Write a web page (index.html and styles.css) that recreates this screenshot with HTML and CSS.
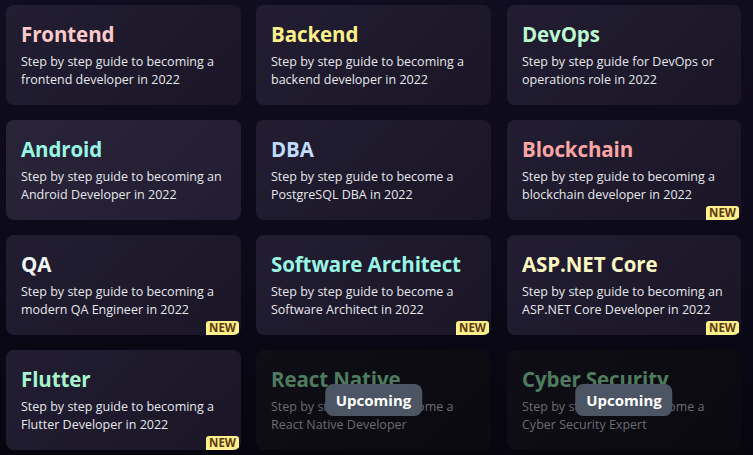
FILE: index.html
```html
<!DOCTYPE html>
<html>
<head>
<meta charset="utf-8">
<link rel="stylesheet" href="styles.css">
</head>
<body>
<div class="grid">
  <a class="card">
    <h3 class="title t-frontend">Frontend</h3>
    <p class="desc">Step by step guide to becoming a frontend developer in 2022</p>
  </a>
  <a class="card">
    <h3 class="title t-backend">Backend</h3>
    <p class="desc">Step by step guide to becoming a backend developer in 2022</p>
  </a>
  <a class="card">
    <h3 class="title t-devops">DevOps</h3>
    <p class="desc">Step by step guide for DevOps or operations role in 2022</p>
  </a>
  <a class="card card-hover">
    <h3 class="title t-android">Android</h3>
    <p class="desc">Step by step guide to becoming an Android Developer in 2022</p>
  </a>
  <a class="card">
    <h3 class="title t-dba">DBA</h3>
    <p class="desc">Step by step guide to become a PostgreSQL DBA in 2022</p>
  </a>
  <a class="card">
    <h3 class="title t-blockchain">Blockchain</h3>
    <p class="desc">Step by step guide to becoming a blockchain developer in 2022</p>
    <span class="new">NEW</span>
  </a>
  <a class="card">
    <h3 class="title t-qa">QA</h3>
    <p class="desc">Step by step guide to becoming a modern QA Engineer in 2022</p>
    <span class="new">NEW</span>
  </a>
  <a class="card">
    <h3 class="title t-arch">Software Architect</h3>
    <p class="desc">Step by step guide to become a Software Architect in 2022</p>
    <span class="new">NEW</span>
  </a>
  <a class="card">
    <h3 class="title t-asp">ASP.NET Core</h3>
    <p class="desc">Step by step guide to becoming an ASP.NET Core Developer in 2022</p>
    <span class="new">NEW</span>
  </a>
  <a class="card">
    <h3 class="title t-flutter">Flutter</h3>
    <p class="desc">Step by step guide to becoming a Flutter Developer in 2022</p>
    <span class="new">NEW</span>
  </a>
  <div class="card card-upcoming">
    <div class="dim">
      <h3 class="title t-up">React Native</h3>
      <p class="desc">Step by step guide to become a React Native Developer</p>
    </div>
    <span class="upcoming">Upcoming</span>
  </div>
  <div class="card card-upcoming">
    <div class="dim">
      <h3 class="title t-up">Cyber Security</h3>
      <p class="desc">Step by step guide to become a Cyber Security Expert</p>
    </div>
    <span class="upcoming">Upcoming</span>
  </div>
</div>
</body>
</html>
```

FILE: styles.css
```css
* { box-sizing: border-box; }
html, body { height: 100%; }
body {
  margin: 0;
  background: linear-gradient(180deg, #110d20 0%, #0c0919 60%, #07050e 100%);
  font-family: "Open Sans", "Noto Sans", sans-serif;
  overflow: hidden;
}
.grid {
  display: grid;
  grid-template-columns: repeat(3, 235px);
  grid-auto-rows: 100px;
  column-gap: 15px;
  row-gap: 15px;
  padding: 5px 0 0 6px;
}
.grid > .card:nth-child(3n) { margin-left: 1px; }
.card {
  position: relative;
  display: block;
  border-radius: 8px;
  padding: 16px 6px 0 15px;
  background: linear-gradient(135deg, #221d31 0%, #1a1627 100%);
  text-decoration: none;
  overflow: hidden;
}
.card-hover { background: linear-gradient(135deg, #2a2439 0%, #221d32 100%); }
.title {
  margin: 0;
  font-size: 20.5px;
  font-weight: 700;
  line-height: 26px;
  letter-spacing: -0.1px;
}
.desc {
  margin: 6px 0 0;
  font-size: 12.5px;
  line-height: 18px;
  color: #e5e7eb;
}
.t-frontend { color: #fecaca; }
.t-backend { color: #fef08a; }
.t-devops { color: #bbf7d0; }
.t-android { color: #99f6e4; }
.t-dba { color: #bfdbfe; }
.t-blockchain { color: #fca5a5; }
.t-qa { color: #f3f4f6; }
.t-arch { color: #99f6e4; }
.t-asp { color: #fef9c3; }
.t-flutter { color: #a7f3d0; }
.t-up { color: #4d7c5f; }
.new {
  position: absolute;
  right: 2px;
  bottom: 0;
  background: #fef08a;
  color: #5c3a10;
  font-size: 11.5px;
  font-weight: 700;
  line-height: 14px;
  padding: 0 3px;
  border-radius: 3px 3px 0 0;
}
.card-upcoming {
  background: linear-gradient(135deg, #0f0d15 0%, #0b0a10 100%);
}
.card-upcoming .desc { color: #6b6b73; }
.upcoming {
  position: absolute;
  left: 50%;
  top: 50%;
  transform: translate(-50%, -50%);
  background: #4b5563;
  color: #ffffff;
  font-size: 15px;
  font-weight: 700;
  line-height: 32px;
  padding: 0 11px;
  border-radius: 8px;
}
```
